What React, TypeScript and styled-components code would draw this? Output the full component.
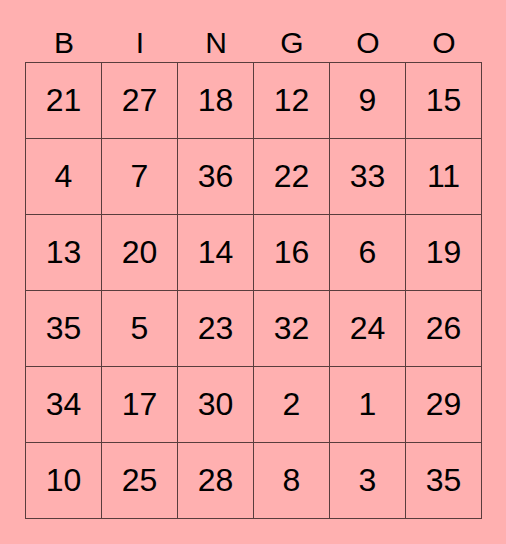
import React from "react";
import styled, { createGlobalStyle } from "styled-components";

const Global = createGlobalStyle`
  html, body { margin: 0; padding: 0; background: #ffb0b0; }
  body { font-family: "Liberation Sans", Arial, sans-serif; }
`;

const Page = styled.div`
  width: 506px;
  height: 544px;
  box-sizing: border-box;
  padding: 26px 0 0 25px;
  background: #ffb0b0;
  color: #000;
`;

const Header = styled.div`
  display: grid;
  grid-template-columns: repeat(6, 76px);
  height: 36px;
  padding-left: 1px;
`;

const Letter = styled.div`
  font-size: 30px;
  line-height: 34px;
  text-align: center;
`;

const Board = styled.div`
  display: grid;
  grid-template-columns: repeat(6, 76px);
  grid-auto-rows: 76px;
  width: max-content;
  border-left: 1px solid rgba(0, 0, 0, 0.65);
  border-top: 1px solid rgba(0, 0, 0, 0.65);
`;

const Cell = styled.div`
  box-sizing: border-box;
  border-right: 1px solid rgba(0, 0, 0, 0.65);
  border-bottom: 1px solid rgba(0, 0, 0, 0.65);
  display: flex;
  align-items: center;
  justify-content: center;
  font-size: 32px;
`;

const letters = ["B", "I", "N", "G", "O", "O"];
const rows = [
  [21, 27, 18, 12, 9, 15],
  [4, 7, 36, 22, 33, 11],
  [13, 20, 14, 16, 6, 19],
  [35, 5, 23, 32, 24, 26],
  [34, 17, 30, 2, 1, 29],
  [10, 25, 28, 8, 3, 35],
];

export default function App() {
  return (
    <>
      <Global />
      <Page>
        <Header>
          {letters.map((l, i) => (
            <Letter key={i}>{l}</Letter>
          ))}
        </Header>
        <Board>
          {rows.flat().map((n, i) => (
            <Cell key={i}>{n}</Cell>
          ))}
        </Board>
      </Page>
    </>
  );
}
